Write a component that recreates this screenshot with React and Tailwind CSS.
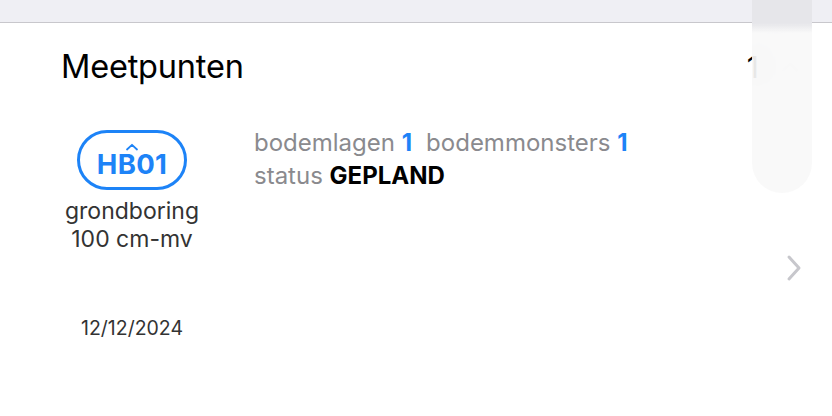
import { ChevronUp } from "lucide-react";

function Pill() {
  return (
    <div className="relative flex h-[60px] w-[110px] items-center justify-center rounded-full border-[3px] border-[#1d83f7]">
      <span className="pt-[9px] text-[27.5px] font-bold leading-none tracking-[0.3px] text-[#1d83f7]">HB01</span>
      <svg
        className="absolute left-[45px] top-[10px]"
        width="14"
        height="8"
        viewBox="0 0 14 8"
        fill="none"
      >
        <path d="M2 6.5 L7 1.8 L12 6.5" stroke="#1d83f7" strokeWidth="1.8" strokeLinecap="round" strokeLinejoin="round" />
      </svg>
    </div>
  );
}

export default function App() {
  return (
    <div className="relative h-[416px] w-[832px] overflow-hidden bg-white font-['Inter',sans-serif]">
      <div className="h-[23px] border-b border-[#c8c7cc] bg-[#efeff4]" />

      <div className="flex items-center pl-[61px] pr-[29px] pt-[24px]">
        <h1 className="text-[32.5px] leading-[40px] font-normal text-black tracking-[-0.2px]">Meetpunten</h1>
        <span className="ml-auto text-[30px] leading-[40px] text-black">1</span>
        <ChevronUp className="ml-[18px] text-[#c4c4c7]" size={26} strokeWidth={2.5} />
      </div>

      <div className="flex pl-[61px] pt-[43px]">
        <div className="flex w-[142px] flex-col items-center">
          <Pill />
          <div className="mt-[7px] text-center text-[23px] leading-[28px] text-[#333]">
            <div>grondboring</div>
            <div>100 cm-mv</div>
          </div>
          <div className="mt-[63px] text-[19.5px] leading-[24px] text-[#333]">12/12/2024</div>
        </div>

        <div className="-mt-[4px] ml-[51px] text-[24px] leading-[33px] text-[#8a8a8e]">
          <div>
            bodemlagen <span className="font-bold text-[#1d83f7]">1</span>
            <span className="ml-[14px]">bodemmonsters </span>
            <span className="font-bold text-[#1d83f7]">1</span>
          </div>
          <div>
            status <span className="font-bold text-black">GEPLAND</span>
          </div>
        </div>

        <svg className="ml-auto mr-[30px] mt-[124px]" width="16" height="28" viewBox="0 0 16 28" fill="none">
          <path d="M3 3 L13 14 L3 25" stroke="#c7c7cc" strokeWidth="3" strokeLinecap="round" strokeLinejoin="round" />
        </svg>
      </div>

      <div className="absolute left-[752px] top-0 h-[193px] w-[60px] overflow-hidden rounded-b-[30px] bg-[#f8f8f8]/85 backdrop-blur-lg">
        <div className="h-[23px] bg-[#e6e6ea]" />
        <div className="h-[10px] bg-gradient-to-b from-[#e6e6ea] to-transparent" />
      </div>
    </div>
  );
}
